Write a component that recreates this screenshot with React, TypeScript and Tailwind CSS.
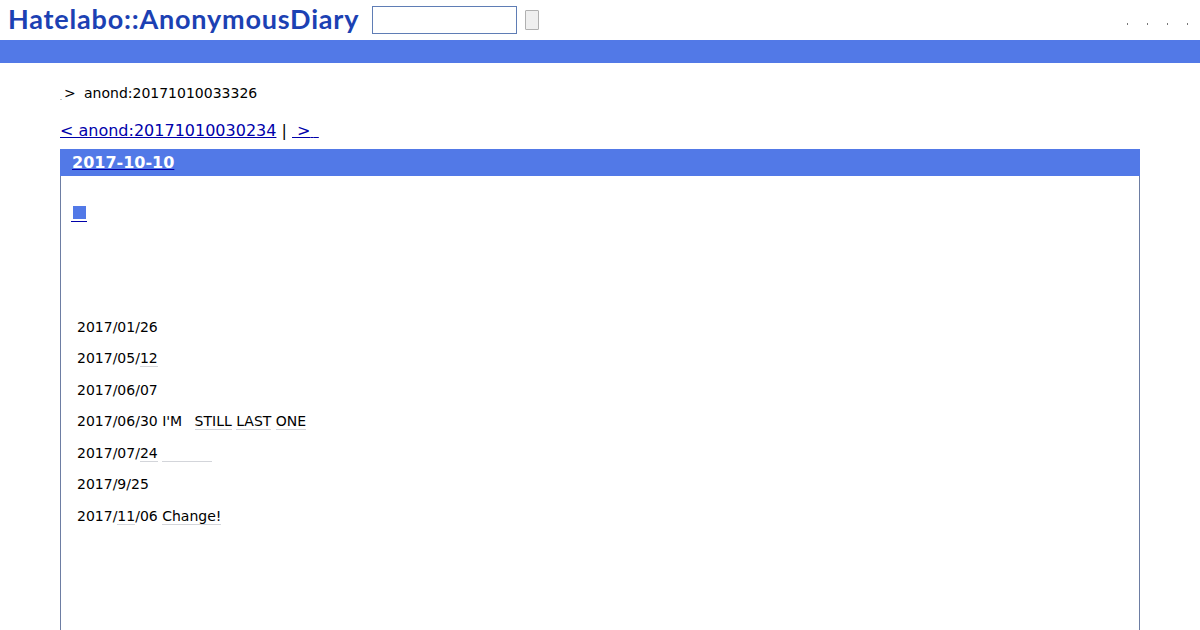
const dejavu = "font-['DejaVu_Sans',sans-serif]";

function Keyword({ children, className = "" }: { children?: React.ReactNode; className?: string }) {
  return <span className={"border-b border-[#d3d5da] " + className}>{children}</span>;
}

function Entry({ children }: { children: React.ReactNode }) {
  return <p className="mb-[10.5px] h-[21px] leading-[21px] whitespace-pre">{children}</p>;
}

export default function App() {
  return (
    <div className={dejavu + " h-[630px] overflow-hidden bg-white text-black"}>
      <header className="flex h-10 items-center">
        <a className="ml-[8px] -mt-0.5 w-[352px] font-['Lato',sans-serif] text-[27px] font-bold leading-10 tracking-[0.8px] whitespace-nowrap text-[#1c41b3]">
          Hatelabo::AnonymousDiary
        </a>
        <input className="ml-3 h-7 w-[145px] border border-[#5f7db5] bg-white" />
        <button className="ml-2 h-5 w-[14px] rounded-[1px] border border-[#b0b0b0] bg-[#efefef]" />
        <ul className="mt-2 mr-3 ml-auto flex gap-[19px]">
          {[0, 1, 2, 3].map((i) => (
            <li key={i} className="h-[2px] w-px bg-[#777]" />
          ))}
        </ul>
      </header>
      <div className="h-[23px] bg-[#5279e7]" />

      <main className="px-[60px]">
        <p className="mt-5 flex h-[21px] items-center text-sm leading-[21px] whitespace-pre">
          <span className="relative top-[4px] w-[4px] text-[6px] leading-none">.</span>
          <span className="w-5">&gt;</span>
          <span>anond:20171010033326</span>
        </p>
        <nav className="mt-[17px] h-[19px] leading-[19px] whitespace-pre text-[#00a]">
          <a className="underline">&lt; anond:20171010030234</a>
          <span className="text-black"> | </span>
          <a className="underline"> &gt;{"\u2009"} </a>
        </nav>
        <section className="mt-[9px] h-[600px] border border-t-0 border-[#6d7da3]">
          <h2 className="-mx-px h-[27px] bg-[#5279e7] pl-3 text-base leading-[27px] font-bold text-white">
            <a className="underline decoration-[#00a]">2017-10-10</a>
          </h2>
          <div className="pt-[26px] pl-[10px]">
            <a className="block h-5 w-4 border-b border-[#00a] pt-[4px] pl-[2px]">
              <span className="block h-[13px] w-[13px] bg-[#5279e7]" />
            </a>
          </div>
          <div className="mt-[94.5px] pl-4 text-sm">
            <Entry>2017/01/26</Entry>
            <Entry>2017/05/<Keyword>12</Keyword></Entry>
            <Entry>2017/06/07</Entry>
            <Entry>
              2017/06/30 I'M{"   "}<Keyword className="-ml-px">STILL</Keyword> <Keyword>LAST</Keyword> <Keyword>ONE</Keyword>
            </Entry>
            <Entry>
              2017/07/<Keyword>24</Keyword> <Keyword className="inline-block h-[19px] w-[50px] align-top" />
            </Entry>
            <Entry>2017/9/25</Entry>
            <Entry>
              2017/<Keyword>11</Keyword>/06 <Keyword>Change!</Keyword>
            </Entry>
          </div>
        </section>
      </main>
    </div>
  );
}
